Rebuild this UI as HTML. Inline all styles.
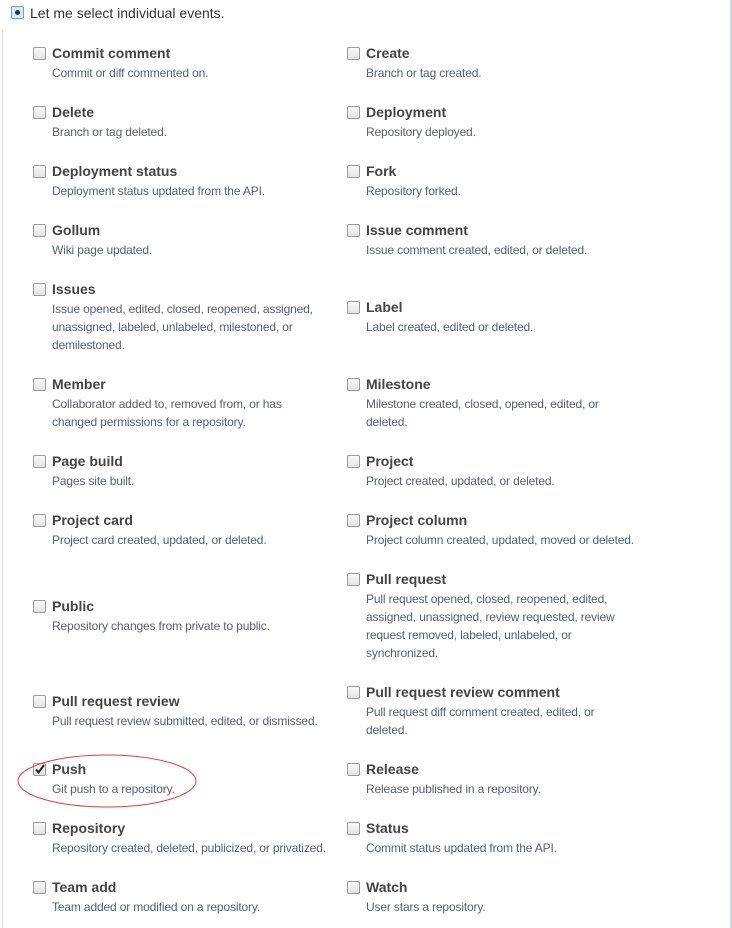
<!DOCTYPE html>
<html><head><meta charset="utf-8"><style>
body{margin:0;width:732px;height:928px;background:#fff;position:relative;overflow:hidden;font-family:"Liberation Sans",Arial,sans-serif}
.bl{position:absolute;left:2px;top:30px;width:1px;height:898px;background:#ddd}
.br{position:absolute;left:730px;top:0;width:2px;height:928px;background:#d8d8e0}
.it{position:absolute;white-space:nowrap}
.t{font-size:14px;font-weight:bold;color:#444;line-height:18px;height:18px}
.d{font-size:12px;color:#586069;line-height:18px;letter-spacing:-0.15px;margin-top:2px}
.cb{position:absolute;width:11px;height:11px;border:1px solid #9a9a9a;border-radius:2px;background:linear-gradient(#fafafa,#e2e2e2);left:-19px;top:3px}
.top{position:absolute;left:30px;top:4px;font-size:14px;color:#333;line-height:18px}
.radio{position:absolute;left:11px;top:6px;width:11px;height:11px;border:1px solid #6a9fd4;border-radius:2px;background:#dceafb}
.radio:after{content:"";position:absolute;left:3px;top:3px;width:5px;height:5px;border-radius:50%;background:#333}
</style></head><body>
<div class="bl"></div><div class="br"></div>
<div class="radio"></div><div class="top">Let me select individual events.</div>

<div class="it" style="left:52px;top:44px"><div class="cb"></div><div class="t">Commit comment</div><div class="d">Commit or diff commented on.</div></div>
<div class="it" style="left:52px;top:103px"><div class="cb"></div><div class="t">Delete</div><div class="d">Branch or tag deleted.</div></div>
<div class="it" style="left:52px;top:162px"><div class="cb"></div><div class="t">Deployment status</div><div class="d">Deployment status updated from the API.</div></div>
<div class="it" style="left:52px;top:221px"><div class="cb"></div><div class="t">Gollum</div><div class="d">Wiki page updated.</div></div>
<div class="it" style="left:52px;top:280px"><div class="cb"></div><div class="t">Issues</div><div class="d">Issue opened, edited, closed, reopened, assigned,<br>unassigned, labeled, unlabeled, milestoned, or<br>demilestoned.</div></div>
<div class="it" style="left:52px;top:375px"><div class="cb"></div><div class="t">Member</div><div class="d">Collaborator added to, removed from, or has<br>changed permissions for a repository.</div></div>
<div class="it" style="left:52px;top:452px"><div class="cb"></div><div class="t">Page build</div><div class="d">Pages site built.</div></div>
<div class="it" style="left:52px;top:511px"><div class="cb"></div><div class="t">Project card</div><div class="d">Project card created, updated, or deleted.</div></div>
<div class="it" style="left:52px;top:597px"><div class="cb"></div><div class="t">Public</div><div class="d">Repository changes from private to public.</div></div>
<div class="it" style="left:52px;top:692px"><div class="cb"></div><div class="t">Pull request review</div><div class="d">Pull request review submitted, edited, or dismissed.</div></div>
<div class="it" style="left:52px;top:760px"><div class="cb"><svg width="11" height="11" style="position:absolute;left:0;top:0"><path d="M2 5.5L4.5 8.5L10 1" stroke="#222" stroke-width="2" fill="none"/></svg></div><div class="t">Push</div><div class="d">Git push to a repository.</div></div>
<div class="it" style="left:52px;top:819px"><div class="cb"></div><div class="t">Repository</div><div class="d">Repository created, deleted, publicized, or privatized.</div></div>
<div class="it" style="left:52px;top:878px"><div class="cb"></div><div class="t">Team add</div><div class="d">Team added or modified on a repository.</div></div>

<div class="it" style="left:366px;top:44px"><div class="cb"></div><div class="t">Create</div><div class="d">Branch or tag created.</div></div>
<div class="it" style="left:366px;top:103px"><div class="cb"></div><div class="t">Deployment</div><div class="d">Repository deployed.</div></div>
<div class="it" style="left:366px;top:162px"><div class="cb"></div><div class="t">Fork</div><div class="d">Repository forked.</div></div>
<div class="it" style="left:366px;top:221px"><div class="cb"></div><div class="t">Issue comment</div><div class="d">Issue comment created, edited, or deleted.</div></div>
<div class="it" style="left:366px;top:298px"><div class="cb"></div><div class="t">Label</div><div class="d">Label created, edited or deleted.</div></div>
<div class="it" style="left:366px;top:375px"><div class="cb"></div><div class="t">Milestone</div><div class="d">Milestone created, closed, opened, edited, or<br>deleted.</div></div>
<div class="it" style="left:366px;top:452px"><div class="cb"></div><div class="t">Project</div><div class="d">Project created, updated, or deleted.</div></div>
<div class="it" style="left:366px;top:511px"><div class="cb"></div><div class="t">Project column</div><div class="d">Project column created, updated, moved or deleted.</div></div>
<div class="it" style="left:366px;top:570px"><div class="cb"></div><div class="t">Pull request</div><div class="d">Pull request opened, closed, reopened, edited,<br>assigned, unassigned, review requested, review<br>request removed, labeled, unlabeled, or<br>synchronized.</div></div>
<div class="it" style="left:366px;top:683px"><div class="cb"></div><div class="t">Pull request review comment</div><div class="d">Pull request diff comment created, edited, or<br>deleted.</div></div>
<div class="it" style="left:366px;top:760px"><div class="cb"></div><div class="t">Release</div><div class="d">Release published in a repository.</div></div>
<div class="it" style="left:366px;top:819px"><div class="cb"></div><div class="t">Status</div><div class="d">Commit status updated from the API.</div></div>
<div class="it" style="left:366px;top:878px"><div class="cb"></div><div class="t">Watch</div><div class="d">User stars a repository.</div></div>

<svg style="position:absolute;left:0;top:0" width="732" height="928"><ellipse cx="107" cy="781" rx="89" ry="26" fill="none" stroke="#e83a3a" stroke-width="1"/></svg>
</body></html>
